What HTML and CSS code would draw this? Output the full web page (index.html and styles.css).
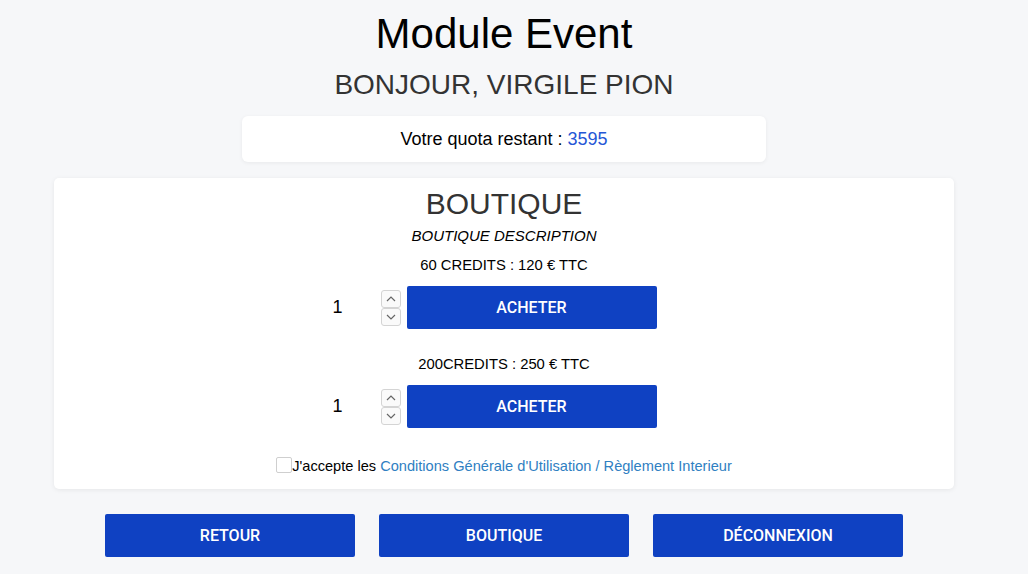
FILE: index.html
```html
<!DOCTYPE html>
<html lang="fr">
<head>
<meta charset="utf-8">
<title>Module Event</title>
<link rel="stylesheet" href="styles.css">
</head>
<body>
<div class="page">
  <h1 class="title">Module Event</h1>
  <h2 class="greeting">BONJOUR, VIRGILE PION</h2>
  <div class="quota">Votre quota restant : <span class="quota-num">3595</span></div>

  <section class="card">
    <h3 class="card-title">BOUTIQUE</h3>
    <p class="card-desc">BOUTIQUE DESCRIPTION</p>

    <p class="offer">60 CREDITS : 120 € TTC</p>
    <div class="buy-row">
      <div class="qty">
        <span class="qty-val">1</span>
        <div class="spin">
          <span class="spin-btn"><svg viewBox="0 0 10 6" width="10" height="6"><path d="M1 5 L5 1 L9 5" fill="none" stroke="#666" stroke-width="1.2"/></svg></span>
          <span class="spin-btn"><svg viewBox="0 0 10 6" width="10" height="6"><path d="M1 1 L5 5 L9 1" fill="none" stroke="#666" stroke-width="1.2"/></svg></span>
        </div>
      </div>
      <button class="btn btn-buy">ACHETER</button>
    </div>

    <p class="offer offer-2">200CREDITS : 250 € TTC</p>
    <div class="buy-row">
      <div class="qty">
        <span class="qty-val">1</span>
        <div class="spin">
          <span class="spin-btn"><svg viewBox="0 0 10 6" width="10" height="6"><path d="M1 5 L5 1 L9 5" fill="none" stroke="#666" stroke-width="1.2"/></svg></span>
          <span class="spin-btn"><svg viewBox="0 0 10 6" width="10" height="6"><path d="M1 1 L5 5 L9 1" fill="none" stroke="#666" stroke-width="1.2"/></svg></span>
        </div>
      </div>
      <button class="btn btn-buy">ACHETER</button>
    </div>

    <div class="terms">
      <span class="checkbox"></span><span>J'accepte les <a class="terms-link" href="#">Conditions Générale d'Utilisation / Règlement Interieur</a></span>
    </div>
  </section>

  <nav class="actions">
    <button class="btn btn-nav">RETOUR</button>
    <button class="btn btn-nav">BOUTIQUE</button>
    <button class="btn btn-nav">DÉCONNEXION</button>
  </nav>
</div>
</body>
</html>
```

FILE: styles.css
```css
* { box-sizing: border-box; }

html, body {
  margin: 0;
  padding: 0;
  background: #f6f7f9;
}

body {
  font-family: "Liberation Sans", Arial, sans-serif;
  color: #000;
}

.page {
  width: 1008px;
  display: flex;
  flex-direction: column;
  align-items: center;
}

.title {
  margin: 9px 0 0;
  font-size: 42px;
  line-height: 50px;
  font-weight: 400;
  color: #000;
}

.greeting {
  margin: 8px 0 0;
  font-size: 28px;
  line-height: 36px;
  font-weight: 400;
  color: #333;
}

.quota {
  margin-top: 13px;
  width: 524px;
  height: 46px;
  background: #fff;
  border-radius: 6px;
  box-shadow: 0 1px 4px rgba(0, 0, 0, 0.06);
  display: flex;
  align-items: center;
  justify-content: center;
  font-size: 18px;
}

.quota-num { color: #2557d6; margin-left: 5px; }

.card {
  margin-top: 16px;
  width: 900px;
  background: #fff;
  border-radius: 5px;
  box-shadow: 0 1px 5px rgba(0, 0, 0, 0.07);
  padding: 8px 0 13px;
  display: flex;
  flex-direction: column;
  align-items: center;
}

.card-title {
  margin: 0;
  font-size: 30px;
  line-height: 36px;
  font-weight: 400;
  color: #333;
}

.card-desc {
  margin: 4px 0 0;
  font-size: 15px;
  line-height: 20px;
  font-style: italic;
}

.offer {
  margin: 9px 0 0;
  font-size: 14.8px;
  line-height: 20px;
}

.offer-2 { margin-top: 25px; }

.buy-row {
  margin-top: 11px;
  display: flex;
  align-items: center;
  padding-right: 22px;
}

.qty {
  display: flex;
  align-items: center;
  width: 77px;
}

.qty-val {
  width: 51px;
  padding-left: 3px;
  font-size: 18px;
}

.spin {
  display: flex;
  flex-direction: column;
}

.spin-btn {
  width: 20px;
  height: 18px;
  border: 1px solid #d4d4d4;
  border-radius: 3px;
  background: #fafafa;
  display: flex;
  align-items: center;
  justify-content: center;
}

.btn {
  border: 0;
  background: #0f41c2;
  color: #fff;
  font-family: Roboto, "Liberation Sans", sans-serif;
  font-weight: 500;
  font-size: 16px;
  width: 250px;
  height: 43px;
  border-radius: 2px;
  padding: 0;
  cursor: pointer;
}

.terms {
  margin-top: 28px;
  display: flex;
  align-items: center;
  font-size: 14.6px;
  line-height: 20px;
}

.checkbox {
  width: 16px;
  height: 16px;
  border: 1px solid #cfcfcf;
  border-radius: 2px;
  background: #fff;
  margin-top: -3px;
}

.terms-link {
  color: #2f80c2;
  text-decoration: none;
}

.actions {
  margin-top: 25px;
  display: flex;
  gap: 24px;
}
```
